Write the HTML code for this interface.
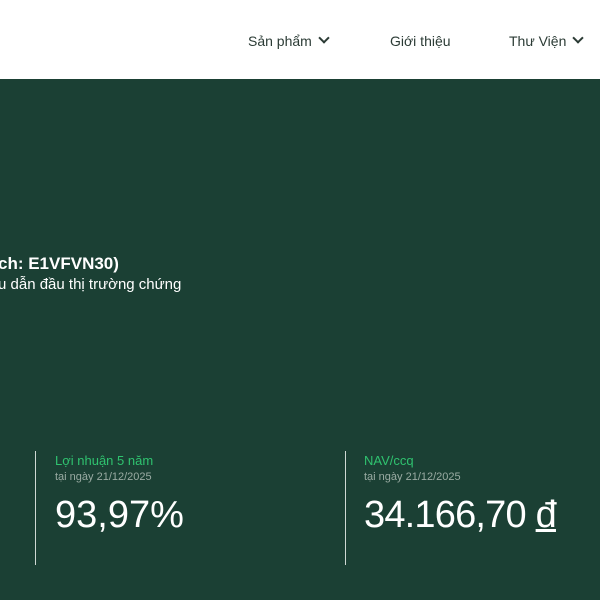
<!DOCTYPE html>
<html><head><meta charset="utf-8"><style>
body{margin:0;width:600px;height:600px;overflow:hidden;background:#1b4034;font-family:"Liberation Sans",sans-serif;position:relative}
.hd{position:absolute;left:0;top:0;width:600px;height:79px;background:#fff}
.nav{position:absolute;top:33px;font-size:14px;color:#2b3b35}
.chev{display:inline-block;width:6px;height:6px;border-right:2px solid #2b3b35;border-bottom:2px solid #2b3b35;transform:rotate(45deg);margin-left:8px;position:relative;top:-4px}
.t{position:absolute;color:#fff;white-space:nowrap}
.vl{position:absolute;top:451px;width:1px;height:114px;background:#cfd8d3}
.g{color:#2fc26f;font-size:13px}
.s{color:#9aaba3;font-size:11px}
.big{font-size:38px;color:#fff}
</style></head><body>
<div class="hd">
<div class="nav" style="left:248px">Sản phẩm<span class="chev"></span></div>
<div class="nav" style="left:390px">Giới thiệu</div>
<div class="nav" style="left:509px">Thư Viện<span class="chev"></span></div>
</div>
<div class="t" style="left:-2px;top:254px;font-size:17px;font-weight:bold">ch: E1VFVN30)</div>
<div class="t" style="left:-2px;top:276px;font-size:15px">u dẫn đầu thị trường chứng</div>
<div class="vl" style="left:35px"></div>
<div class="vl" style="left:345px"></div>
<div class="t g" style="left:55px;top:453px">Lợi nhuận 5 năm</div>
<div class="t s" style="left:55px;top:471px">tại ngày 21/12/2025</div>
<div class="t big" style="left:55px;top:494px">93,97%</div>
<div class="t g" style="left:364px;top:453px">NAV/ccq</div>
<div class="t s" style="left:364px;top:471px">tại ngày 21/12/2025</div>
<div class="t big" style="left:364px;top:494px;letter-spacing:-0.8px">34.166,70 <u>đ</u></div>
</body></html>
